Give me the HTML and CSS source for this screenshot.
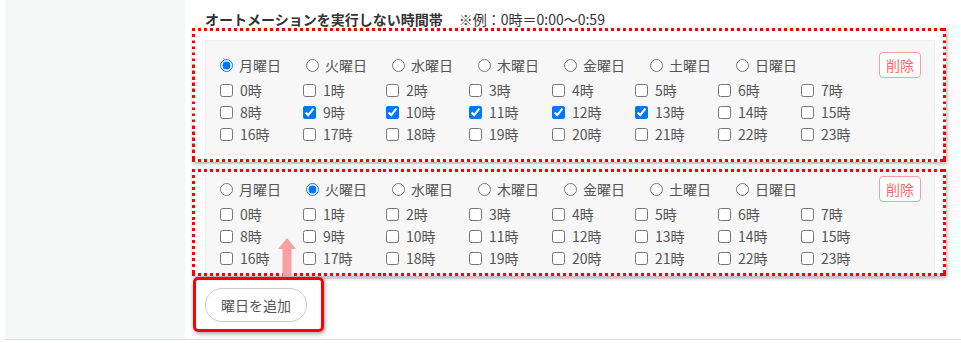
FILE: index.html
```html
<!DOCTYPE html>
<html lang="ja">
<head>
    <meta charset="UTF-8">
    <meta name="viewport" content="width=device-width, initial-scale=1.0">
    <title>Automation Schedule</title>
    <link rel="stylesheet" href="styles.css">
</head>
<body>
    <div class="page">
        <aside class="sidebar"></aside>
        <main class="main">
            <h3 class="section-title">オートメーションを実行しない時間帯<span class="note">※例：0時＝0:00〜0:59</span></h3>

            <!-- 1つ目の曜日 -->
            <div class="day-card">
                <div class="day-head">
                    <div class="days">
                        <label class="opt"><input type="radio" name="day1" checked>月曜日</label>
                        <label class="opt"><input type="radio" name="day1">火曜日</label>
                        <label class="opt"><input type="radio" name="day1">水曜日</label>
                        <label class="opt"><input type="radio" name="day1">木曜日</label>
                        <label class="opt"><input type="radio" name="day1">金曜日</label>
                        <label class="opt"><input type="radio" name="day1">土曜日</label>
                        <label class="opt"><input type="radio" name="day1">日曜日</label>
                    </div>
                    <button type="button" class="btn-delete">削除</button>
                </div>
                <div class="hours">
                    <label class="opt"><input type="checkbox">0時</label>
                    <label class="opt"><input type="checkbox">1時</label>
                    <label class="opt"><input type="checkbox">2時</label>
                    <label class="opt"><input type="checkbox">3時</label>
                    <label class="opt"><input type="checkbox">4時</label>
                    <label class="opt"><input type="checkbox">5時</label>
                    <label class="opt"><input type="checkbox">6時</label>
                    <label class="opt"><input type="checkbox">7時</label>
                    <label class="opt"><input type="checkbox">8時</label>
                    <label class="opt"><input type="checkbox" checked>9時</label>
                    <label class="opt"><input type="checkbox" checked>10時</label>
                    <label class="opt"><input type="checkbox" checked>11時</label>
                    <label class="opt"><input type="checkbox" checked>12時</label>
                    <label class="opt"><input type="checkbox" checked>13時</label>
                    <label class="opt"><input type="checkbox">14時</label>
                    <label class="opt"><input type="checkbox">15時</label>
                    <label class="opt"><input type="checkbox">16時</label>
                    <label class="opt"><input type="checkbox">17時</label>
                    <label class="opt"><input type="checkbox">18時</label>
                    <label class="opt"><input type="checkbox">19時</label>
                    <label class="opt"><input type="checkbox">20時</label>
                    <label class="opt"><input type="checkbox">21時</label>
                    <label class="opt"><input type="checkbox">22時</label>
                    <label class="opt"><input type="checkbox">23時</label>
                </div>
                <div class="mark-dotted mark-first"></div>
            </div>

            <!-- 2つ目の曜日 -->
            <div class="day-card">
                <div class="day-head">
                    <div class="days">
                        <label class="opt"><input type="radio" name="day2">月曜日</label>
                        <label class="opt"><input type="radio" name="day2" checked>火曜日</label>
                        <label class="opt"><input type="radio" name="day2">水曜日</label>
                        <label class="opt"><input type="radio" name="day2">木曜日</label>
                        <label class="opt"><input type="radio" name="day2">金曜日</label>
                        <label class="opt"><input type="radio" name="day2">土曜日</label>
                        <label class="opt"><input type="radio" name="day2">日曜日</label>
                    </div>
                    <button type="button" class="btn-delete">削除</button>
                </div>
                <div class="hours">
                    <label class="opt"><input type="checkbox">0時</label>
                    <label class="opt"><input type="checkbox">1時</label>
                    <label class="opt"><input type="checkbox">2時</label>
                    <label class="opt"><input type="checkbox">3時</label>
                    <label class="opt"><input type="checkbox">4時</label>
                    <label class="opt"><input type="checkbox">5時</label>
                    <label class="opt"><input type="checkbox">6時</label>
                    <label class="opt"><input type="checkbox">7時</label>
                    <label class="opt"><input type="checkbox">8時</label>
                    <label class="opt"><input type="checkbox">9時</label>
                    <label class="opt"><input type="checkbox">10時</label>
                    <label class="opt"><input type="checkbox">11時</label>
                    <label class="opt"><input type="checkbox">12時</label>
                    <label class="opt"><input type="checkbox">13時</label>
                    <label class="opt"><input type="checkbox">14時</label>
                    <label class="opt"><input type="checkbox">15時</label>
                    <label class="opt"><input type="checkbox">16時</label>
                    <label class="opt"><input type="checkbox">17時</label>
                    <label class="opt"><input type="checkbox">18時</label>
                    <label class="opt"><input type="checkbox">19時</label>
                    <label class="opt"><input type="checkbox">20時</label>
                    <label class="opt"><input type="checkbox">21時</label>
                    <label class="opt"><input type="checkbox">22時</label>
                    <label class="opt"><input type="checkbox">23時</label>
                </div>
                <div class="mark-dotted mark-second"></div>
                <svg class="mark-arrow" width="18" height="38" viewBox="0 0 18 38">
                    <polygon points="9,0 18,11 13.5,11 13.5,38 4.5,38 4.5,11 0,11" fill="#f9a0a0"/>
                </svg>
            </div>

            <div class="add-row">
                <button type="button" class="btn-add">曜日を追加</button>
                <div class="mark-solid"></div>
            </div>
        </main>
    </div>
</body>
</html>
```

FILE: styles.css
```css
/* ページ全体 */
body {
    margin: 0;
    font-family: "Noto Sans CJK JP", "Noto Sans", sans-serif;
    font-size: 14px;
    color: #555;
    background: #fff;
}
.page {
    display: flex;
    height: 339px;
    margin-left: 5px;
    border-bottom: 1px solid #dcdcdc;
}
.sidebar {
    width: 180px;
    background: #f5f6f6;
}
.main {
    flex: 1;
    padding: 9px 0 0 20px;
}
.section-title {
    margin: 0;
    font-size: 14px;
    line-height: 20px;
    font-weight: bold;
    color: #333;
}
.note {
    font-weight: normal;
    margin-left: 16px;
}

/* 曜日カード */
.day-card {
    position: relative;
    box-sizing: border-box;
    width: 730px;
    margin-top: 11px;
    padding: 11px 13px 9px 14px;
    background: #f7f7f7;
    border: 1px solid #efefef;
}
.day-card + .day-card {
    margin-top: 9px;
}
.day-head {
    display: flex;
    align-items: center;
    height: 26px;
}
.days {
    display: grid;
    grid-template-columns: repeat(7, 86px);
}
.hours {
    display: grid;
    grid-template-columns: repeat(8, 83px);
    margin-top: 1px;
}
.opt {
    display: flex;
    align-items: center;
    line-height: 22px;
    white-space: nowrap;
}
.opt input {
    width: 13px;
    height: 13px;
    margin: 0 7px 0 0;
}
.days .opt input {
    margin: 0 6px 0 0;
}
.btn-delete {
    margin-left: auto;
    height: 26px;
    padding: 0 6px;
    border: 1px solid #f3a0a0;
    border-radius: 4px;
    background: #fff;
    color: #ec6f6f;
    font: inherit;
    cursor: pointer;
}

/* 追加ボタン */
.add-row {
    position: relative;
    display: inline-block;
    margin-top: 9px;
}
.btn-add {
    display: block;
    height: 34px;
    padding: 0 15px;
    border: 1px solid #ccc;
    border-radius: 17px;
    background: #fff;
    color: #555;
    font: inherit;
    cursor: pointer;
}

/* 注釈 */
.mark-dotted {
    position: absolute;
    left: -14px;
    right: -12px;
    border: 3px solid #f00;
    border-image: url("data:image/svg+xml,%3Csvg xmlns='http://www.w3.org/2000/svg' width='12' height='12'%3E%3Cg fill='%23f00'%3E%3Crect x='0' y='0' width='3' height='3'/%3E%3Crect x='6' y='0' width='3' height='3'/%3E%3Crect x='9' y='0' width='3' height='3'/%3E%3Crect x='0' y='6' width='3' height='3'/%3E%3Crect x='9' y='6' width='3' height='3'/%3E%3Crect x='0' y='9' width='3' height='3'/%3E%3Crect x='6' y='9' width='3' height='3'/%3E%3Crect x='9' y='9' width='3' height='3'/%3E%3C/g%3E%3C/svg%3E") 3 round;
    box-shadow: 1px 2px 4px rgba(0,0,0,0.3);
    pointer-events: none;
}
.mark-first {
    top: -13px;
    bottom: -8px;
}
.mark-second {
    top: 4px;
    bottom: 2px;
}
.mark-arrow {
    position: absolute;
    left: 72px;
    top: 73px;
}
.mark-solid {
    position: absolute;
    left: -12px;
    right: -17px;
    top: -11px;
    bottom: -10px;
    border: 3px solid #f00;
    border-radius: 5px;
    box-shadow: 1px 2px 4px rgba(0,0,0,0.35);
    pointer-events: none;
}
```
